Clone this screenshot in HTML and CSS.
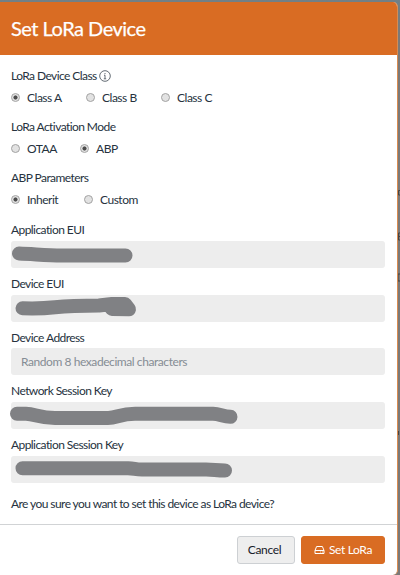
FILE: index.html
```html
<!DOCTYPE html>
<html lang="en">
<head>
<meta charset="utf-8">
<title>Set LoRa Device</title>
<link rel="stylesheet" href="styles.css">
</head>
<body>
<svg class="backdrop" viewBox="0 0 3 575" aria-hidden="true"><path d="M3 190.500H1.500V195H3M3 233H1.500V240H3M1.500 236.500H3M3 274H1V281H3M1.500 431V435"/></svg>
<form class="modal">
  <header class="modal-header"><h1>Set LoRa Device</h1></header>
  <div class="modal-body">
    <section class="options">
      <div class="label">LoRa Device Class
        <svg class="info" viewBox="0 0 12 12"><circle cx="6" cy="6" r="5.3"/><path d="M6 3v1.1M5 5.2h1v3.4M4.8 8.8h2.4"/></svg>
      </div>
      <div class="radios class-radios">
        <label><input type="radio" name="class" checked>Class A</label>
        <label><input type="radio" name="class">Class B</label>
        <label><input type="radio" name="class">Class C</label>
      </div>
    </section>
    <section class="options">
      <div class="label">LoRa Activation Mode</div>
      <div class="radios mode-radios">
        <label><input type="radio" name="mode">OTAA</label>
        <label><input type="radio" name="mode" checked>ABP</label>
      </div>
    </section>
    <section class="options">
      <div class="label">ABP Parameters</div>
      <div class="radios param-radios">
        <label><input type="radio" name="params" checked>Inherit</label>
        <label><input type="radio" name="params">Custom</label>
      </div>
    </section>
    <section class="fields">
      <div class="label">Application EUI</div>
      <div class="field"><svg class="mark" viewBox="11 241 374 27"><path d="M19 253.500C34 254 46 255.500 62 255.500H125.500"/></svg></div>
      <div class="label">Device EUI</div>
      <div class="field"><svg class="mark" viewBox="11 295 374 27"><path d="M22.500 308.300C38 308.800 46 308.300 55 307.300S90 305.500 99 305.500L112 304H125L129 309.300L112 309"/></svg></div>
      <div class="label">Device Address</div>
      <div class="field">Random 8 hexadecimal characters</div>
      <div class="label">Network Session Key</div>
      <div class="field"><svg class="mark" viewBox="11 402 374 27"><path d="M17 413.700H26C35 414 40 418 55 418H108C117 418 120 413.700 135 413.700H213C220 414 223 416.500 230.500 416.800"/></svg></div>
      <div class="label">Application Session Key</div>
      <div class="field"><svg class="mark" viewBox="11 455.500 374 27"><path d="M22.500 467.700H128C135 468 135 469 142 469H206C214 469 216 470 225 470"/></svg></div>
    </section>
    <p class="question">Are you sure you want to set this device as LoRa device?</p>
  </div>
  <footer class="modal-footer">
    <button type="button" class="button">Cancel</button>
    <button type="button" class="button primary"><svg class="drive" viewBox="0 0 11 10"><path d="M1 5.500L2.600 1.500H8.400L10 5.500V8.500H1ZM1 5.500H10M6.300 7h.8M8 7h.8"/></svg>Set LoRa</button>
  </footer>
</form>
</body>
</html>
```

FILE: styles.css
```css
* { box-sizing: border-box; }
body {
  position: relative;
  margin: 0;
  height: 575px;
  padding-top: 2px;
  overflow: hidden;
  background: linear-gradient(#718087, #7b7978 40px, #7b7978);
  font: 12px/16px Lato, sans-serif;
  letter-spacing: -.57px;
  color: #26323e;
}
/* Edge of the dimmed page behind the dialog */
.backdrop {
  position: absolute;
  top: 0;
  right: 0;
  width: 3px;
  height: 575px;
  fill: none;
  stroke: #444;
  stroke-width: 1;
}
.modal {
  position: relative;
  width: 398px;
  height: 573px;
  overflow: hidden;
  background: #fff;
  border-right: 1px solid #d98b50;
  border-radius: 0 5px 5px 0;
}
.modal-header {
  display: flex;
  align-items: center;
  height: 53px;
  margin-right: -1px;
  padding: 0 11px 1px;
  background: #d96c23;
  color: #fff;
}
h1 { margin: 0; font-size: 20px; line-height: 24px; font-weight: 400; letter-spacing: -.5px; -webkit-text-stroke: .25px #fff; }
.modal-body { height: 469px; padding: 13px 12px 0 11px; }
.options { height: 51px; }
.label { display: flex; align-items: center; gap: 2px; height: 16px; }
.info { width: 12px; height: 12px; margin-top: -1px; fill: none; stroke: #3c4650; stroke-width: .8; }
.radios { display: flex; margin-top: 6px; height: 16px; letter-spacing: -.48px; }
.radios label { display: flex; align-items: center; }
.class-radios label { width: 75px; }
.mode-radios label { width: 69px; }
.param-radios label { width: 73px; }
input {
  appearance: none;
  width: 9px;
  height: 9px;
  margin: 0 7px 1px 0;
  border: 1px solid #a3a3a3;
  border-radius: 50%;
  background: #e2e2e2;
}
input:checked { background: radial-gradient(circle, #4c4c4c 0 1.7px, #e2e2e2 2.4px); }
.fields {
  display: grid;
  grid-template-rows: 16px 27px repeat(4, 20.7px 27px);
  row-gap: 3px;
  padding-top: 1px;
}
.fields .label:not(:first-child) { margin-top: 5px; }
.field {
  display: flex;
  align-items: center;
  height: 27px;
  padding-left: 10px;
  border-radius: 3px;
  background: #ededed;
  color: #858c94;
  letter-spacing: -.43px;
}
.mark {
  flex: none;
  width: 374px;
  height: 27px;
  margin-left: -10px;
  overflow: visible;
  fill: none;
  stroke: #808184;
  stroke-width: 14;
  stroke-linecap: round;
  stroke-linejoin: round;
}
.question { margin: 13px 0 0; }
.modal-footer {
  display: flex;
  justify-content: flex-end;
  gap: 6px;
  height: 51px;
  padding: 11px 12px 0;
  border-top: 1px solid #d1d3d5;
}
.button {
  display: flex;
  align-items: center;
  justify-content: center;
  width: 58px;
  height: 28px;
  padding: 0 3px 0 0;
  border: 1px solid #cdd0d3;
  border-radius: 3px;
  background: #eee;
  color: #17202a;
  font: 12px/16px Lato, sans-serif;
  letter-spacing: -.35px;
}
.primary { width: 84px; padding: 0; gap: 4px; border-color: #d96c23; background: #d96c23; color: #fff; }
.drive { width: 11px; height: 10px; fill: none; stroke: #fff; stroke-width: 1; }
```
